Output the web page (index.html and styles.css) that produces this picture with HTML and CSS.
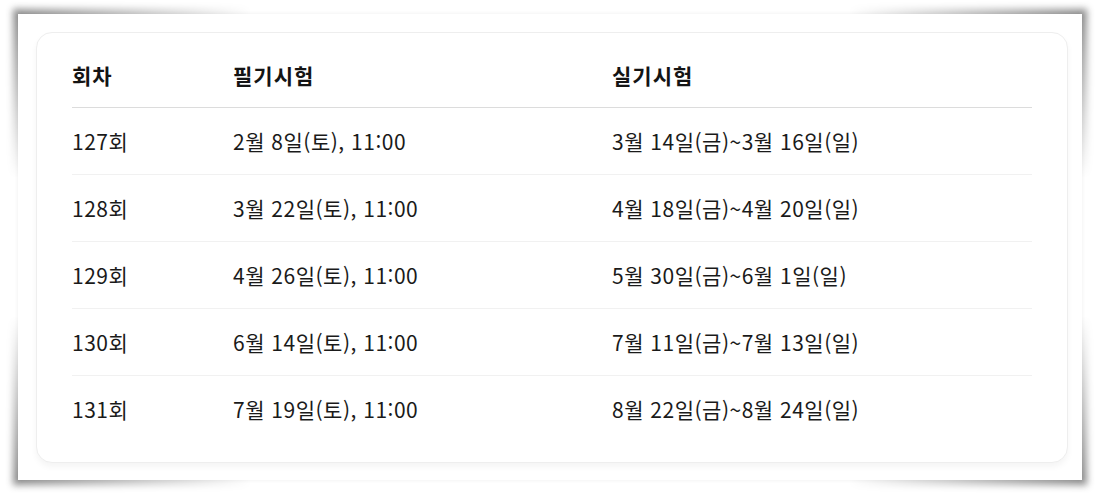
FILE: index.html
```html
<!DOCTYPE html>
<html lang="ko">
<head>
<meta charset="utf-8">
<title>시험 일정</title>
<link rel="stylesheet" href="styles.css">
</head>
<body>
<div class="frame">
  <div class="card">
    <table class="schedule">
      <colgroup>
        <col class="c-round">
        <col class="c-written">
        <col class="c-practical">
      </colgroup>
      <thead>
        <tr><th>회차</th><th>필기시험</th><th>실기시험</th></tr>
      </thead>
      <tbody>
        <tr><td>127회</td><td>2월 8일(토), 11:00</td><td>3월 14일(금)~3월 16일(일)</td></tr>
        <tr><td>128회</td><td>3월 22일(토), 11:00</td><td>4월 18일(금)~4월 20일(일)</td></tr>
        <tr><td>129회</td><td>4월 26일(토), 11:00</td><td>5월 30일(금)~6월 1일(일)</td></tr>
        <tr><td>130회</td><td>6월 14일(토), 11:00</td><td>7월 11일(금)~7월 13일(일)</td></tr>
        <tr><td>131회</td><td>7월 19일(토), 11:00</td><td>8월 22일(금)~8월 24일(일)</td></tr>
      </tbody>
    </table>
  </div>
</div>
</body>
</html>
```
FILE: styles.css
```css
html {
  margin: 0;
  padding: 0;
  background: #ffffff;
}

body {
  margin: 0;
  padding: 0;
  font-family: "Noto Sans CJK KR", "Noto Sans", sans-serif;
  color: #1a1a1a;
}

.frame {
  position: relative;
  box-sizing: border-box;
  width: 1064px;
  height: 466px;
  margin: 14px 17px 15px 18px;
  padding: 18px 14px 17px 18px;
  background: #ffffff;
  box-shadow: 0 0 4px rgba(0, 0, 0, 0.07);
}

/* page-curl style shadow, strongest near the four corners */
.frame::before {
  content: "";
  position: absolute;
  inset: -16px;
  z-index: -1;
  background: linear-gradient(rgba(0, 0, 0, 0.5), rgba(0, 0, 0, 0.5)) center / calc(100% - 22px) calc(100% - 22px) no-repeat;
  filter: blur(3.5px);
  -webkit-mask-image:
    linear-gradient(to right, #000 0, rgba(0,0,0,0) 250px, rgba(0,0,0,0) calc(100% - 250px), #000 100%),
    linear-gradient(to bottom, #000 0, rgba(0,0,0,0) 180px, rgba(0,0,0,0) calc(100% - 180px), #000 100%);
  -webkit-mask-composite: source-in;
  mask-image:
    linear-gradient(to right, #000 0, rgba(0,0,0,0) 250px, rgba(0,0,0,0) calc(100% - 250px), #000 100%),
    linear-gradient(to bottom, #000 0, rgba(0,0,0,0) 180px, rgba(0,0,0,0) calc(100% - 180px), #000 100%);
  mask-composite: intersect;
}

.card {
  box-sizing: border-box;
  width: 1032px;
  height: 431px;
  padding: 9px 35px 19px;
  background: #ffffff;
  border: 1px solid #eeeeee;
  border-radius: 16px;
  box-shadow: 0 4px 6px rgba(0, 0, 0, 0.045);
}

.schedule {
  width: 960px;
  border-collapse: collapse;
  table-layout: fixed;
}

.c-round { width: 161px; }
.c-written { width: 379px; }
.c-practical { width: 420px; }

.schedule th,
.schedule td {
  padding: 0;
  text-align: left;
  vertical-align: middle;
  font-size: 21px;
  line-height: 26px;
  letter-spacing: 0.5px;
  white-space: nowrap;
}

.schedule th {
  height: 65px;
  font-weight: 700;
  color: #141414;
  letter-spacing: 1px;
  border-bottom: 1px solid #dcdcdc;
}

.schedule td {
  height: 66px;
  font-weight: 400;
  color: #1a1a1a;
  border-bottom: 1px solid #f1f1f1;
}

.schedule tbody tr:last-child td {
  border-bottom: none;
}
```
